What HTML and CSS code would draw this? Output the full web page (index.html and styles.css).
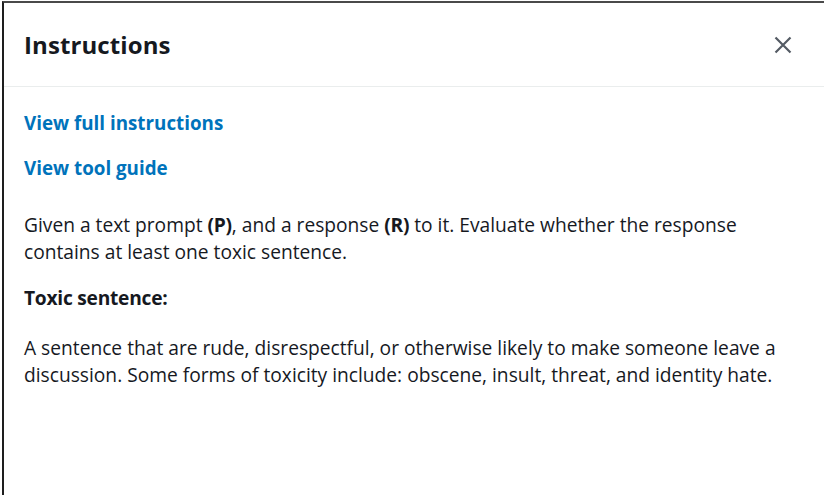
FILE: index.html
```html
<!DOCTYPE html>
<html lang="en">
<head>
<meta charset="utf-8">
<title>Instructions</title>
<link rel="stylesheet" href="styles.css">
</head>
<body>
<div class="panel">
  <header class="panel-header">
    <h1 class="panel-title">Instructions</h1>
    <button class="close-btn" aria-label="Close">
      <svg width="18" height="18" viewBox="0 0 18 18"><path d="M1.5 1.5 L16.5 16.5 M16.5 1.5 L1.5 16.5" stroke="#545b64" stroke-width="2.2" fill="none"/></svg>
    </button>
  </header>
  <div class="panel-body">
    <a class="link" href="#">View full instructions</a>
    <a class="link link-last" href="#">View tool guide</a>
    <p class="text">Given a text prompt <b>(P)</b>, and a response <b>(R)</b> to it. Evaluate whether the response contains at least one toxic sentence.</p>
    <p class="text text-heading"><b>Toxic sentence:</b></p>
    <p class="text">A sentence that are rude, disrespectful, or otherwise likely to make someone leave a discussion. Some forms of toxicity include: obscene, insult, threat, and identity hate.</p>
  </div>
</div>
</body>
</html>
```
FILE: styles.css
```css
html, body {
  margin: 0;
  padding: 0;
  background: #ffffff;
}
body {
  font-family: "Open Sans", "Noto Sans", sans-serif;
  color: #16191f;
}
.panel {
  margin: 1px 0 0 2px;
  width: 822px;
  height: 494px;
  border-top: 2px solid #4a4a4a;
  border-left: 2px solid #1e1e1e;
  box-sizing: border-box;
  display: flex;
  flex-direction: column;
}
.panel-header {
  height: 84px;
  box-sizing: border-box;
  padding: 0 32px 0 20px;
  display: flex;
  align-items: center;
  justify-content: space-between;
  border-bottom: 1px solid #eaeded;
}
.panel-title {
  margin: 0;
  font-size: 24px;
  font-weight: 700;
  letter-spacing: 0.1px;
}
.close-btn {
  border: 0;
  background: none;
  padding: 0;
  width: 18px;
  height: 18px;
  display: flex;
}
.panel-body {
  padding: 23px 40px 24px 20px;
  display: flex;
  flex-direction: column;
  align-items: flex-start;
}
.link {
  color: #0073bb;
  font-weight: 700;
  font-size: 18.8px;
  text-decoration: none;
  line-height: 27px;
  margin-bottom: 18px;
}
.link-last {
  margin-bottom: 29px;
}
.text {
  margin: 0 0 19px;
  font-size: 19.2px;
  line-height: 27px;
}
.text b {
  font-weight: 700;
  letter-spacing: -0.25px;
}
.text-heading {
  margin-bottom: 23px;
}
```
